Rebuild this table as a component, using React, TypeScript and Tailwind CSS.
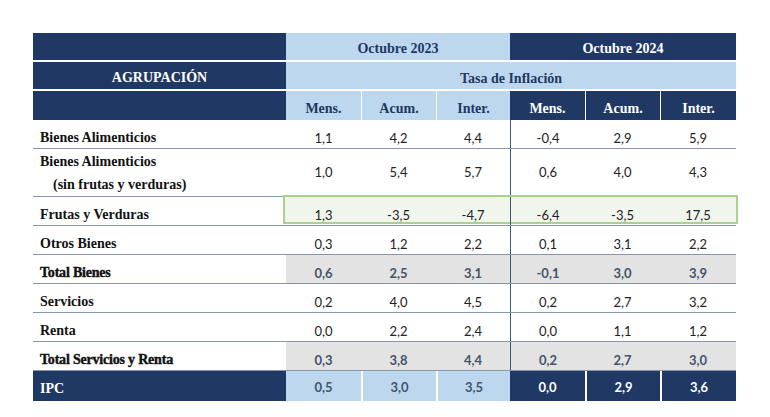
const serif = { fontFamily: '"Liberation Serif", "DejaVu Serif", serif' };
const sans = { fontFamily: 'Lato, "Open Sans", sans-serif' };

const grid = "grid grid-cols-[253px_75px_75px_74px_75px_75px_76px]";

type Row = {
  label: string;
  sub?: string;
  v: string[];
  total?: boolean;
  green?: boolean;
};

const rows: Row[] = [
  { label: "Bienes Alimenticios", v: ["1,1", "4,2", "4,4", "-0,4", "2,9", "5,9"] },
  {
    label: "Bienes Alimenticios",
    sub: "(sin frutas y verduras)",
    v: ["1,0", "5,4", "5,7", "0,6", "4,0", "4,3"],
  },
  { label: "Frutas y Verduras", v: ["1,3", "-3,5", "-4,7", "-6,4", "-3,5", "17,5"], green: true },
  { label: "Otros Bienes", v: ["0,3", "1,2", "2,2", "0,1", "3,1", "2,2"] },
  { label: "Total Bienes", v: ["0,6", "2,5", "3,1", "-0,1", "3,0", "3,9"], total: true },
  { label: "Servicios", v: ["0,2", "4,0", "4,5", "0,2", "2,7", "3,2"] },
  { label: "Renta", v: ["0,0", "2,2", "2,4", "0,0", "1,1", "1,2"] },
  { label: "Total Servicios y Renta", v: ["0,3", "3,8", "4,4", "0,2", "2,7", "3,0"], total: true },
];

function BodyRow({ row }: { row: Row }) {
  const tall = !!row.sub;
  const align = tall ? "items-center" : "items-end";
  return (
    <div className={`${grid} ${tall ? "h-[48px]" : "h-[29px]"} relative border-b-[1.5px] border-[#8496b0]`}>
      {row.green && (
        <div className="absolute left-[250px] top-[-2px] h-[29px] w-[455px] border-2 border-[#a9d08e] bg-[#f1f6ed]" />
      )}
      <div
        className={`relative flex flex-col justify-center pl-[7px] text-[14px] leading-[21px] font-bold text-[#111] ${
          tall ? "" : "justify-end"
        }`}
        style={serif}
      >
        <span className={row.total ? "tracking-[-0.2px] [-webkit-text-stroke:0.4px_#111]" : ""}>{row.label}</span>
        {row.sub && <span className="mt-[2px] pl-[13px]">{row.sub}</span>}
      </div>
      {row.v.map((v, i) => (
        <div
          key={i}
          className={`relative flex ${align} justify-center text-[13px] leading-[19px] ${
            row.total ? "bg-[#e3e3e3] font-bold text-[#44546a]" : "text-[#222]"
          } ${i === 3 ? "border-l border-[#44546a]" : ""}`}
          style={sans}
        >
          {v}
        </div>
      ))}
    </div>
  );
}

export default function App() {
  const navy = "bg-[#1f3864]";
  const light = "bg-[#bdd7ee]";
  return (
    <div className="min-h-[417px] w-[770px] bg-white pl-[33px] pt-[33px]">
      <div className="w-[703px]">
        {/* header */}
        <div className="flex flex-col gap-[2px] bg-white text-[14px] font-bold" style={serif}>
          <div className={`${grid} h-[27px]`}>
            <div className={navy} />
            <div className={`col-span-3 flex items-center justify-center pt-[3px] text-[#1f3864] ${light}`}>
              Octubre 2023
            </div>
            <div className={`col-span-3 flex items-center justify-center pt-[3px] text-white ${navy}`}>
              Octubre 2024
            </div>
          </div>
          <div className={`${grid} h-[27px]`}>
            <div className={`flex items-center justify-center pt-[4px] text-white ${navy}`}>AGRUPACIÓN</div>
            <div className={`col-span-6 flex items-center justify-center pt-[5px] text-[#1f3864] ${light}`}>
              Tasa de Inflación
            </div>
          </div>
          <div className={`${grid} h-[29px]`}>
            <div className={navy} />
            {["Mens.", "Acum.", "Inter."].map((t, i) => (
              <div
                key={"a" + i}
                className={`flex items-center justify-center pt-[5px] text-[#1f3864] ${light} ${
                  i > 0 ? "border-l border-white" : ""
                }`}
              >
                {t}
              </div>
            ))}
            {["Mens.", "Acum.", "Inter."].map((t, i) => (
              <div
                key={"b" + i}
                className={`flex items-center justify-center pt-[5px] text-white ${navy} ${
                  i > 0 ? "border-l border-white" : ""
                }`}
              >
                {t}
              </div>
            ))}
          </div>
        </div>

        {/* body */}
        {rows.map((r, i) => (
          <BodyRow key={i} row={r} />
        ))}

        {/* IPC */}
        <div className={`${grid} h-[30px]`}>
          <div className={`flex items-center pl-[7px] pt-[4px] text-[14px] font-bold text-white ${navy}`} style={serif}>
            IPC
          </div>
          {["0,5", "3,0", "3,5"].map((v, i) => (
            <div
              key={"p" + i}
              className={`flex items-center justify-center pt-[3px] text-[13px] font-bold text-[#44546a] ${light} ${
                i > 0 ? "border-l-2 border-white" : ""
              }`}
              style={sans}
            >
              {v}
            </div>
          ))}
          {["0,0", "2,9", "3,6"].map((v, i) => (
            <div
              key={"q" + i}
              className={`flex items-center justify-center pt-[3px] text-[13px] font-bold text-white ${navy} ${
                i > 0 ? "border-l-2 border-white" : ""
              }`}
              style={sans}
            >
              {v}
            </div>
          ))}
        </div>
      </div>
    </div>
  );
}
